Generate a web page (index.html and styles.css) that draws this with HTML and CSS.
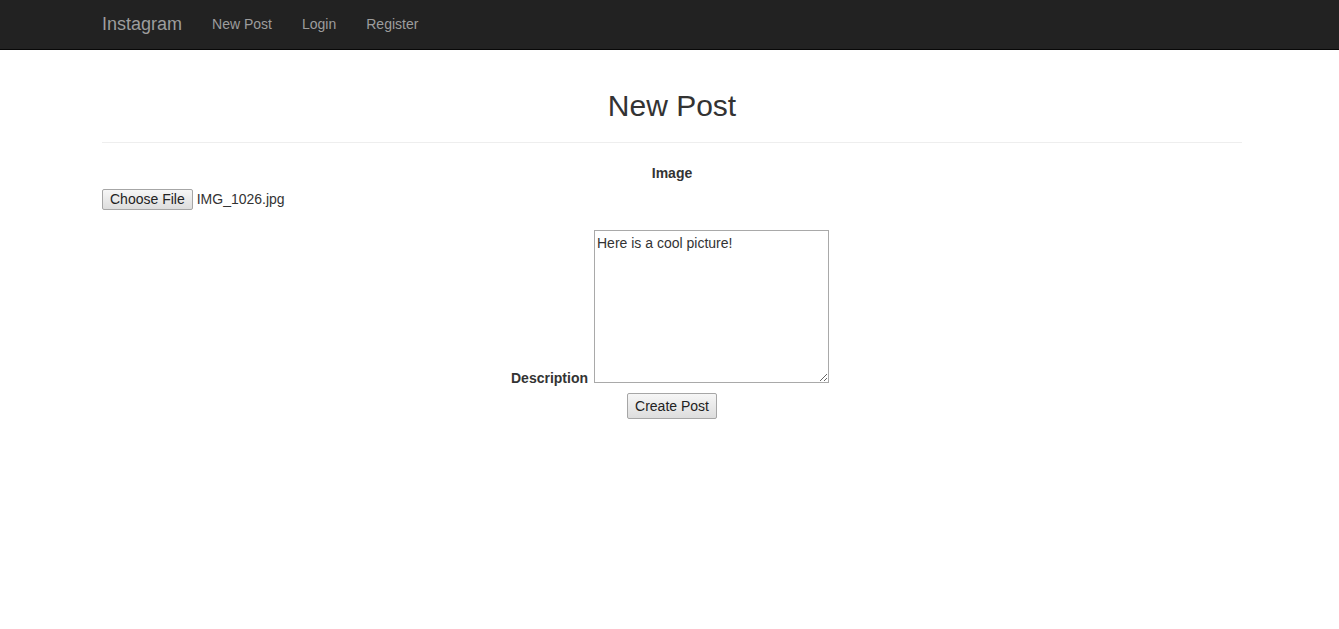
FILE: index.html
```html
<!DOCTYPE html>
<html lang="en">
<head>
<meta charset="utf-8">
<title>Instagram - New Post</title>
<link rel="stylesheet" href="styles.css">
</head>
<body>
<nav class="navbar">
  <div class="container nav-inner">
    <a class="brand" href="#">Instagram</a>
    <ul class="nav-links">
      <li><a href="#">New Post</a></li>
      <li><a href="#">Login</a></li>
      <li><a href="#">Register</a></li>
    </ul>
  </div>
</nav>
<main class="container">
  <div class="page-header">
    <h1 class="page-title">New Post</h1>
  </div>
  <form class="post-form">
    <div class="field-image">
      <label class="field-label">Image</label>
    </div>
    <div class="file-input">
      <button type="button" class="btn">Choose File</button>
      <span class="file-name">IMG_1026.jpg</span>
    </div>
    <div class="field-desc">
      <label class="field-label desc-label">Description</label>
      <textarea class="desc-input">Here is a cool picture!</textarea>
    </div>
    <div class="actions">
      <button type="submit" class="btn btn-submit">Create Post</button>
    </div>
  </form>
</main>
</body>
</html>
```
FILE: styles.css
```css
* { box-sizing: border-box; }
html, body { margin: 0; padding: 0; }
body {
  font-family: "Liberation Sans", Arial, Helvetica, sans-serif;
  font-size: 14px;
  line-height: 20px;
  color: #333;
  background: #fff;
}
.container {
  width: 1140px;
  margin-left: calc(50% - 567.5px);
}
.navbar {
  background: #222;
  border-bottom: 1px solid #080808;
  height: 50px;
}
.nav-inner {
  display: flex;
  align-items: flex-start;
}
.brand {
  font-size: 18px;
  line-height: 20px;
  padding: 14px 15px 15px 0;
  color: #9d9d9d;
  text-decoration: none;
}
.nav-links {
  list-style: none;
  margin: 0;
  padding: 0;
  display: flex;
}
.nav-links a {
  display: block;
  padding: 14px 15px 15px;
  line-height: 20px;
  color: #9d9d9d;
  text-decoration: none;
}
.page-header {
  margin-top: 39px;
  border-bottom: 1px solid #eee;
  padding-bottom: 20px;
  margin-bottom: 20px;
  text-align: center;
}
.page-title {
  margin: 0;
  font-size: 30px;
  line-height: 33px;
  font-weight: 500;
}
.field-image { text-align: center; }
.field-label {
  display: inline-block;
  font-weight: bold;
  margin-bottom: 5px;
}
.file-input {
  display: flex;
  align-items: center;
  gap: 4px;
  height: 22px;
}
.btn {
  font-family: "Liberation Sans", Arial, sans-serif;
  font-size: 14px;
  color: #222;
  background: linear-gradient(#f6f6f6, #dddddd);
  border: 1px solid #a6a6a6;
  border-radius: 2px;
  padding: 1px 7px;
  line-height: 17px;
  height: 21px;
}
.file-name { color: #333; }
.field-desc {
  margin-top: 20px;
  display: flex;
  justify-content: center;
  align-items: flex-end;
  gap: 6px;
  padding-right: 4px;
}
.desc-label {
  margin-bottom: -2px;
  line-height: 14px;
}
.desc-input {
  width: 235px;
  height: 153px;
  border: 1px solid #a9a9a9;
  padding: 4px 2px 2px;
  font-family: "Liberation Sans", Arial, sans-serif;
  font-size: 14px;
  line-height: 16px;
  color: #333;
  resize: both;
  margin: 0;
}
.actions {
  text-align: center;
  margin-top: 10px;
}
.btn-submit {
  height: 26px;
  padding: 4px 7px;
  line-height: 16px;
}
```
